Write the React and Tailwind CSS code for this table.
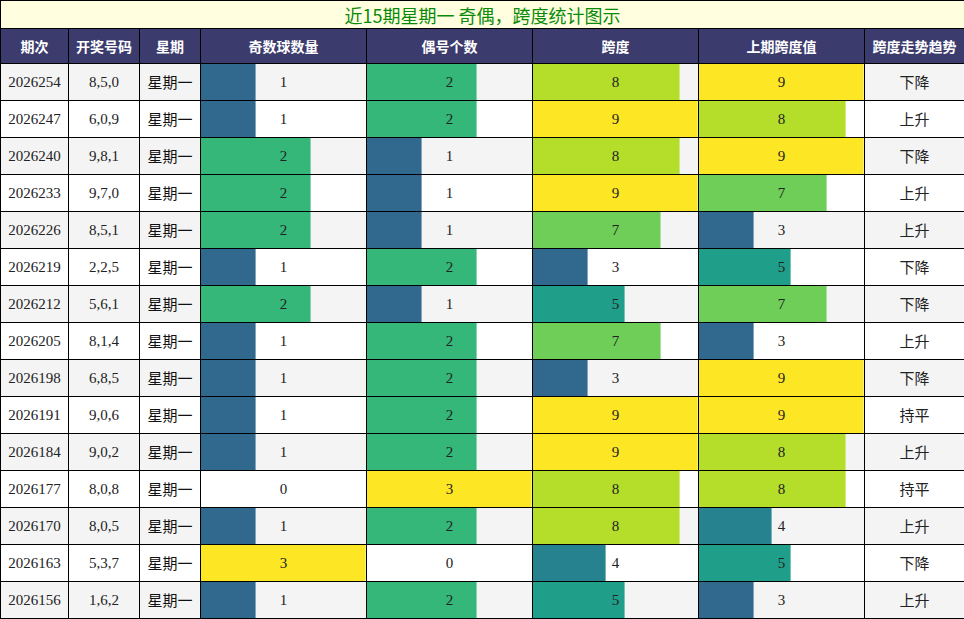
import React from "react";

const rows = [
  ["2026254", "8,5,0", 1, 2, 8, 9, "下降"],
  ["2026247", "6,0,9", 1, 2, 9, 8, "上升"],
  ["2026240", "9,8,1", 2, 1, 8, 9, "下降"],
  ["2026233", "9,7,0", 2, 1, 9, 7, "上升"],
  ["2026226", "8,5,1", 2, 1, 7, 3, "上升"],
  ["2026219", "2,2,5", 1, 2, 3, 5, "下降"],
  ["2026212", "5,6,1", 2, 1, 5, 7, "下降"],
  ["2026205", "8,1,4", 1, 2, 7, 3, "上升"],
  ["2026198", "6,8,5", 1, 2, 3, 9, "下降"],
  ["2026191", "9,0,6", 1, 2, 9, 9, "持平"],
  ["2026184", "9,0,2", 1, 2, 9, 8, "上升"],
  ["2026177", "8,0,8", 0, 3, 8, 8, "持平"],
  ["2026170", "8,0,5", 1, 2, 8, 4, "上升"],
  ["2026163", "5,3,7", 3, 0, 4, 5, "下降"],
  ["2026156", "1,6,2", 1, 2, 5, 3, "上升"],
];

const cntColor = { 1: "#31688e", 2: "#35b779", 3: "#fde725" };
const spanColor = {
  1: "#443a83",
  2: "#3b528b",
  3: "#31688e",
  4: "#26828e",
  5: "#1f9e89",
  6: "#35b779",
  7: "#6ece58",
  8: "#b5de2b",
  9: "#fde725",
};

function BarCell({ value, max, colors }) {
  const pct = (value / max) * 100;
  return (
    <td className="border border-black p-0 h-[37px]">
      <div className="relative h-[36px] flex items-center justify-center">
        {value > 0 && (
          <div
            className="absolute left-0 top-0 bottom-0 border-r border-r-white/40"
            style={{ width: `${pct}%`, backgroundColor: colors[value] }}
          />
        )}
        <span className="relative text-[15px] text-[#222] font-['Liberation_Serif',serif]">
          {value}
        </span>
      </div>
    </td>
  );
}

export default function App() {
  const headers = ["期次", "开奖号码", "星期", "奇数球数量", "偶号个数", "跨度", "上期跨度值", "跨度走势趋势"];
  return (
    <div className="w-[964px] h-[619px] overflow-hidden bg-white">
      <table className="w-[964px] table-fixed border-collapse">
        <colgroup>
          <col className="w-[68px]" />
          <col className="w-[71px]" />
          <col className="w-[61px]" />
          <col className="w-[166px]" />
          <col className="w-[166px]" />
          <col className="w-[166px]" />
          <col className="w-[166px]" />
          <col className="w-[100px]" />
        </colgroup>
        <thead>
          <tr>
            <th
              colSpan={8}
              className="border border-black bg-[#ffffe0] h-[28px] p-0 text-center font-normal text-[18px] leading-[26px] text-[#0a8a0a] font-['Noto_Sans_CJK_SC',sans-serif]"
            >
              近15期星期一 奇偶，跨度统计图示
            </th>
          </tr>
          <tr>
            {headers.map((h) => (
              <th
                key={h}
                className="border border-black bg-[#3c3b6e] h-[35px] p-0 text-center text-white font-bold text-[14px] font-['Noto_Sans_CJK_SC',sans-serif]"
              >
                {h}
              </th>
            ))}
          </tr>
        </thead>
        <tbody>
          {rows.map((r, i) => (
            <tr key={r[0]} className={i % 2 === 0 ? "bg-[#f4f4f4]" : "bg-white"}>
              <td className="border border-black p-0 h-[37px] text-center text-[15px] text-[#222] font-['Liberation_Serif',serif]">
                {r[0]}
              </td>
              <td className="border border-black p-0 text-center text-[15px] text-[#222] font-['Liberation_Serif',serif]">
                {r[1]}
              </td>
              <td className="border border-black p-0 text-center text-[15px] text-[#111] font-['Noto_Sans_CJK_SC',sans-serif]">
                星期一
              </td>
              <BarCell value={r[2]} max={3} colors={cntColor} />
              <BarCell value={r[3]} max={3} colors={cntColor} />
              <BarCell value={r[4]} max={9} colors={spanColor} />
              <BarCell value={r[5]} max={9} colors={spanColor} />
              <td className="border border-black p-0 text-center text-[15px] text-[#222] font-['Noto_Sans_CJK_SC',sans-serif]">
                {r[6]}
              </td>
            </tr>
          ))}
        </tbody>
      </table>
    </div>
  );
}
